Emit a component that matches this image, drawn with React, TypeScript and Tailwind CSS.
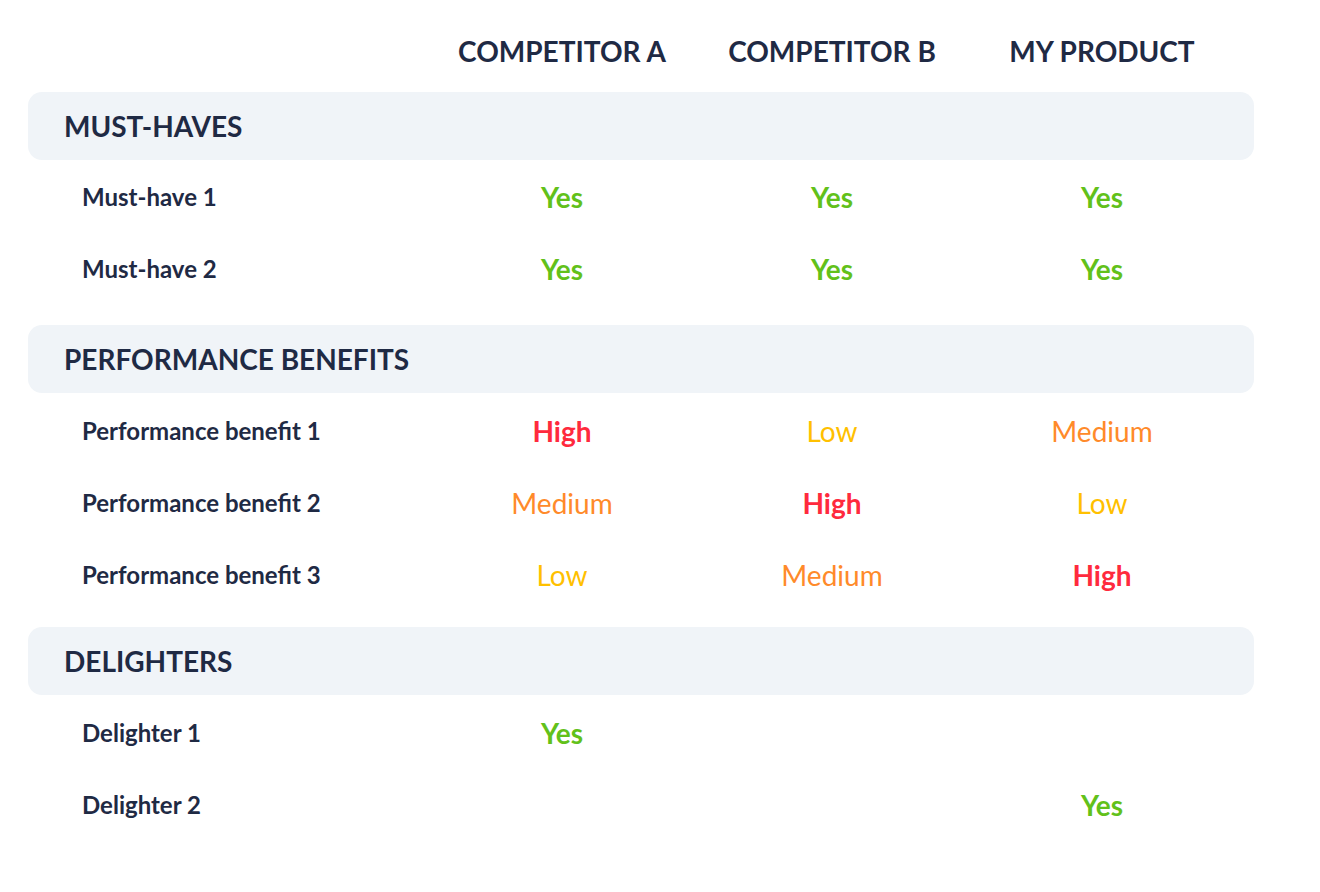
import React from 'react';

type Level = 'Yes' | 'High' | 'Medium' | 'Low' | '';

interface Section {
  title: string;
  rows: { label: string; values: Level[] }[];
}

const sections: Section[] = [
  {
    title: 'MUST-HAVES',
    rows: [
      { label: 'Must-have 1', values: ['Yes', 'Yes', 'Yes'] },
      { label: 'Must-have 2', values: ['Yes', 'Yes', 'Yes'] },
    ],
  },
  {
    title: 'PERFORMANCE BENEFITS',
    rows: [
      { label: 'Performance benefit 1', values: ['High', 'Low', 'Medium'] },
      { label: 'Performance benefit 2', values: ['Medium', 'High', 'Low'] },
      { label: 'Performance benefit 3', values: ['Low', 'Medium', 'High'] },
    ],
  },
  {
    title: 'DELIGHTERS',
    rows: [
      { label: 'Delighter 1', values: ['Yes', '', ''] },
      { label: 'Delighter 2', values: ['', '', 'Yes'] },
    ],
  },
];

const valueStyle: Record<Level, string> = {
  Yes: 'text-[#62c11a] font-bold',
  High: 'text-[#ff2a3d] font-bold',
  Medium: 'text-[#ff8a2a] font-normal',
  Low: 'text-[#ffc000] font-normal',
  '': '',
};

const columns = ['COMPETITOR A', 'COMPETITOR B', 'MY PRODUCT'];

export default function App() {
  return (
    <div className="w-[1320px] h-[892px] bg-white font-['Lato',sans-serif] text-[#1f2a44] pl-[28px] pt-[30px]">
      <div className="w-[1226px]">
        {/* Column headers */}
        <div className="grid grid-cols-[399px_270px_270px_270px] h-[36px] items-center">
          <div />
          {columns.map((c) => (
            <div key={c} className="text-center text-[28px] font-bold whitespace-nowrap">
              {c}
            </div>
          ))}
        </div>

        {sections.map((section, i) => (
          <div key={section.title} className={i === 0 ? 'mt-[26px]' : i === 1 ? 'mt-[20px]' : 'mt-[16px]'}>
            <div className="h-[68px] rounded-[14px] bg-[#f0f4f8] flex items-center pl-[36px]">
              <h2 className="text-[28px] font-bold">{section.title}</h2>
            </div>
            <div className={i === 0 ? 'pt-px' : 'pt-[2px]'}>
              {section.rows.map((row) => (
                <div
                  key={row.label}
                  className="grid grid-cols-[399px_270px_270px_270px] h-[72px] items-center"
                >
                  <div className="pl-[54px] text-[24px] font-bold">{row.label}</div>
                  {row.values.map((v, j) => (
                    <div key={j} className={`text-center text-[28px] ${valueStyle[v]}`}>
                      {v}
                    </div>
                  ))}
                </div>
              ))}
            </div>
          </div>
        ))}
      </div>
    </div>
  );
}
